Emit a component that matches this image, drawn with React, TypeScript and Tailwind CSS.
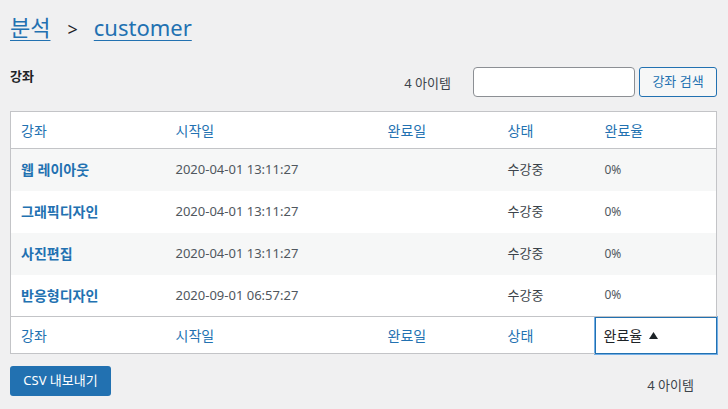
const font = "font-['Noto_Sans','Noto_Sans_CJK_KR',sans-serif]"

const rows = [
  { name: "웹 레이아웃", start: "2020-04-01 13:11:27", status: "수강중", rate: "0%" },
  { name: "그래픽디자인", start: "2020-04-01 13:11:27", status: "수강중", rate: "0%" },
  { name: "사진편집", start: "2020-04-01 13:11:27", status: "수강중", rate: "0%" },
  { name: "반응형디자인", start: "2020-09-01 06:57:27", status: "수강중", rate: "0%" },
]

function HeadRow({ footer }: { footer?: boolean }) {
  const cell = "px-[10px] text-left font-normal text-[14px] text-[#2271b1]"
  return (
    <tr className={footer ? "h-[37px] border-t border-[#c3c4c7]" : "h-[37px] border-b border-[#c3c4c7]"}>
      <th className={cell}>강좌</th>
      <th className={cell}>시작일</th>
      <th className={cell}>완료일</th>
      <th className={cell}>상태</th>
      {footer ? (
        <th className="px-[9px] text-left font-normal text-[14px] text-[#1d2327] outline outline-1 -outline-offset-1 outline-[#2271b1] shadow-[0_0_0_1px_#72aee6]">
          <span className="inline-flex items-center gap-[7px]">
            완료율
            <svg width="9" height="7" viewBox="0 0 9 7"><path d="M4.5 0L9 7H0z" fill="#1d2327" /></svg>
          </span>
        </th>
      ) : (
        <th className={cell}>완료율</th>
      )}
    </tr>
  )
}

export default function App() {
  return (
    <div className={`${font} min-h-[409px] bg-[#f0f0f1] pl-[10px] pr-[11px] pt-[11px] text-[#3c434a]`}>
      <h1 className="flex items-baseline text-[22px] leading-[32px] text-[#2271b1]">
        <a className="underline underline-offset-[4px] decoration-1">분석</a>
        <span className="ml-[17px] mr-[16px] text-[18px] text-[#1d2327]">&gt;</span>
        <a className="underline underline-offset-[4px] decoration-1">customer</a>
      </h1>

      <div className="mt-[22px] flex items-start justify-between">
        <h2 className="text-[13px] font-semibold text-[#1d2327]">강좌</h2>
        <div className="flex items-center">
          <span className="mr-[22px] mt-[4px] text-[13px] text-[#3c434a]">4 아이템</span>
          <input className="h-[30px] w-[162px] rounded-[4px] border border-[#8c8f94] bg-white" />
          <button className="ml-[4px] h-[30px] w-[78px] rounded-[3px] border border-[#2271b1] bg-[#f6f7f7] text-[13px] text-[#2271b1]">
            강좌 검색
          </button>
        </div>
      </div>

      <table className="mt-[14px] w-full table-fixed border-collapse border border-[#c3c4c7] bg-white">
        <colgroup>
          <col className="w-[155px]" />
          <col className="w-[212px]" />
          <col className="w-[120px]" />
          <col className="w-[97px]" />
          <col />
        </colgroup>
        <thead>
          <HeadRow />
        </thead>
        <tbody>
          {rows.map((r, i) => (
            <tr key={i} className={`h-[42px] ${i % 2 === 0 ? "bg-[#f6f7f7]" : "bg-white"}`}>
              <td className="px-[10px] text-[14px] font-bold text-[#2271b1]">{r.name}</td>
              <td className="px-[10px] text-[13px] text-[#50575e]">{r.start}</td>
              <td className="px-[10px]"></td>
              <td className="px-[10px] text-[13px] text-[#3c434a]">{r.status}</td>
              <td className="px-[10px] text-[12px] text-[#50575e]">{r.rate}</td>
            </tr>
          ))}
        </tbody>
        <tfoot>
          <HeadRow footer />
        </tfoot>
      </table>

      <div className="mt-[12px] flex items-start justify-between">
        <button className="h-[30px] w-[101px] rounded-[3px] bg-[#2271b1] text-[13px] text-white">
          CSV 내보내기
        </button>
        <span className="mr-[23px] mt-[10px] text-[13px] text-[#3c434a]">4 아이템</span>
      </div>
    </div>
  )
}
